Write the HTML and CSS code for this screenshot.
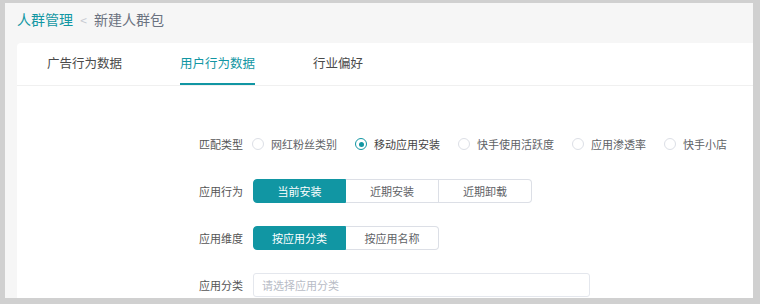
FILE: index.html
```html
<!DOCTYPE html>
<html>
<head>
  <meta charset="utf-8">
  <title>新建人群包</title>
  <link rel="stylesheet" href="styles.css">
</head>
<body>
  <div class="page">
    <div class="crumbs">
      <span class="crumb-link">人群管理</span>
      <span class="crumb-sep">&lt;</span>
      <span class="crumb-current">新建人群包</span>
    </div>

    <div class="card">
      <div class="tabs">
        <div class="tab">广告行为数据</div>
        <div class="tab active">用户行为数据</div>
        <div class="tab">行业偏好</div>
      </div>

      <div class="form">
        <div class="row">
          <div class="label">匹配类型</div>
          <div class="radios">
            <span class="radio"><i class="dot"></i>网红粉丝类别</span>
            <span class="radio checked"><i class="dot"></i>移动应用安装</span>
            <span class="radio"><i class="dot"></i>快手使用活跃度</span>
            <span class="radio"><i class="dot"></i>应用渗透率</span>
            <span class="radio"><i class="dot"></i>快手小店</span>
          </div>
        </div>

        <div class="row">
          <div class="label">应用行为</div>
          <div class="btn-group">
            <button class="seg selected">当前安装</button>
            <button class="seg">近期安装</button>
            <button class="seg">近期卸载</button>
          </div>
        </div>

        <div class="row">
          <div class="label">应用维度</div>
          <div class="btn-group">
            <button class="seg selected">按应用分类</button>
            <button class="seg">按应用名称</button>
          </div>
        </div>

        <div class="row">
          <div class="label">应用分类</div>
          <input class="select" type="text" placeholder="请选择应用分类">
        </div>
      </div>
    </div>
  </div>
</body>
</html>
```

FILE: styles.css
```css
html, body {
  margin: 0;
  height: 304px;
  overflow: hidden;
}

body {
  background-color: #d0d0d0;
  padding: 3px 7px 0 5px;
  box-sizing: border-box;
  font-family: "Noto Sans CJK SC", "Noto Sans", sans-serif;
}

.page {
  height: 295px;
  background-color: #f6f6f6;
  overflow: hidden;
}

.crumbs {
  height: 40px;
  box-sizing: border-box;
  padding: 6px 0 0 12px;
  line-height: 20px;
  font-size: 14px;
}

.crumb-link {
  color: #1196a3;
}

.crumb-sep {
  color: #c8cbd2;
  font-size: 12px;
  margin: 0 4px;
}

.crumb-current {
  color: #6b7280;
}

.card {
  margin-left: 12px;
  background-color: #fff;
  border-radius: 4px 0 0 0;
  height: 300px;
}

.tabs {
  display: flex;
  height: 42px;
  padding-left: 30px;
  border-bottom: 1px solid #f0f0f0;
}

.tab {
  font-size: 12.5px;
  color: #4a4a4a;
  line-height: 40px;
  margin-right: 58px;
  border-bottom: 2px solid transparent;
}

.tab.active {
  color: #1196a3;
  border-bottom-color: #1196a3;
}

.form {
  padding: 46px 0 0 156px;
}

.row {
  display: flex;
  align-items: center;
  height: 24px;
  margin-bottom: 23px;
}

.label {
  width: 80px;
  box-sizing: border-box;
  padding-right: 10px;
  text-align: right;
  font-size: 11px;
  color: #555;
  flex-shrink: 0;
}

.radios {
  display: flex;
  align-items: center;
  margin-left: -1px;
}

.radio {
  display: flex;
  align-items: center;
  font-size: 11px;
  color: #606266;
  margin-right: 18px;
  white-space: nowrap;
}

.dot {
  width: 12px;
  height: 12px;
  box-sizing: border-box;
  border: 1px solid #dcdfe6;
  border-radius: 50%;
  margin-right: 7px;
  position: relative;
}

.radio.checked .dot {
  border-color: #1196a3;
}

.radio.checked .dot::after {
  content: "";
  position: absolute;
  left: 2.5px;
  top: 2.5px;
  width: 5px;
  height: 5px;
  border-radius: 50%;
  background-color: #1196a3;
}

.radio.checked {
  color: #444;
}

.btn-group {
  display: flex;
}

.seg {
  width: 93px;
  height: 24px;
  margin: 0;
  padding: 0;
  border: 1px solid #dcdfe6;
  border-left-width: 0;
  background-color: #fff;
  color: #606266;
  font-family: inherit;
  font-size: 11px;
  cursor: pointer;
}

.seg:first-child {
  border-left-width: 1px;
  border-radius: 4px 0 0 4px;
}

.seg:last-child {
  border-radius: 0 4px 4px 0;
}

.seg.selected {
  background-color: #1196a3;
  border-color: #1196a3;
  color: #fff;
}

.select {
  width: 337px;
  height: 24px;
  box-sizing: border-box;
  margin: 0;
  padding: 0 8px;
  border: 1px solid #e4e7ed;
  border-radius: 3px;
  font-family: inherit;
  font-size: 11px;
  color: #333;
  outline: none;
}

.select::placeholder {
  color: #b8bcc6;
}
```
